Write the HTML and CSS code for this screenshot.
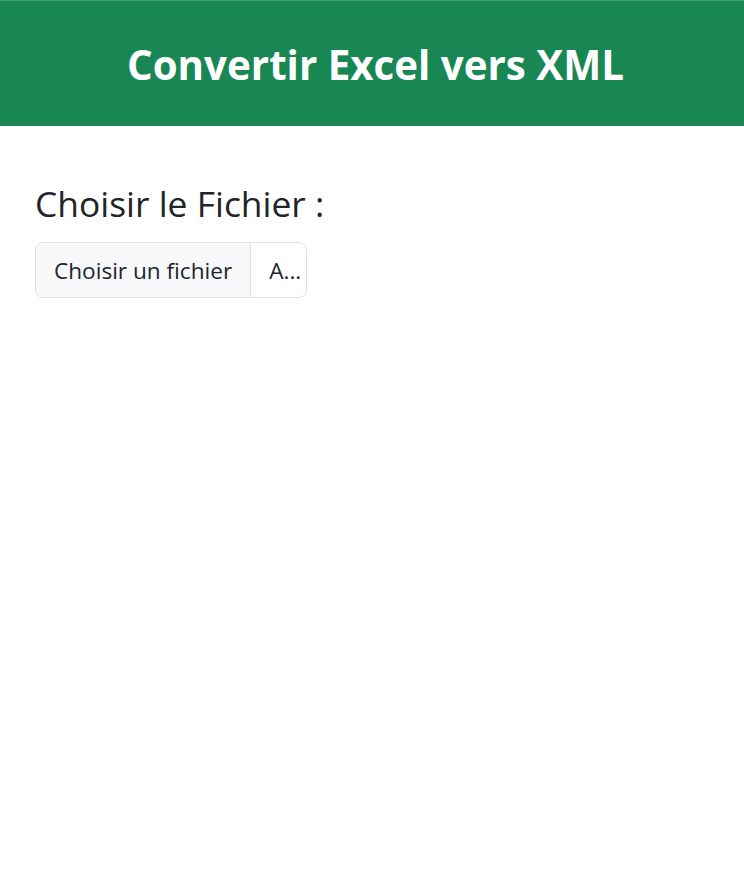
FILE: index.html
```html
<!DOCTYPE html>
<html lang="fr">
<head>
<meta charset="utf-8">
<title>Convertir Excel vers XML</title>
<link rel="stylesheet" href="styles.css">
</head>
<body>
<header class="banner">
  <h1 class="banner-title">Convertir Excel vers XML</h1>
</header>
<main class="container">
  <label class="field-label" for="file">Choisir le Fichier :</label>
  <div class="file-input" id="file">
    <span class="file-button">Choisir un fichier</span>
    <span class="file-name">A...</span>
  </div>
</main>
</body>
</html>
```

FILE: styles.css
```css
* { box-sizing: border-box; }
html, body { margin: 0; padding: 0; background: #fff; }
body {
  font-family: "Open Sans", "Noto Sans", sans-serif;
  color: #212529;
}
.banner {
  background: #198754;
  border-top: 1px solid #4f9f7a;
  height: 126px;
  display: flex;
  align-items: center;
  justify-content: center;
  padding-top: 4px;
}
.banner-title {
  margin: 0;
  color: #fff;
  font-weight: 700;
  font-size: 40.3px;
  line-height: 1.2;
  padding-left: 7px;
}
.container {
  padding: 56px 36px 0 35px;
  display: flex;
  flex-direction: column;
  align-items: flex-start;
}
.field-label {
  display: block;
  font-size: 35.4px;
  line-height: 1.2;
  margin-bottom: 18px;
}
.file-input {
  display: flex;
  width: 272px;
  height: 56px;
  border: 1px solid #dee2e6;
  border-radius: 8px;
  overflow: hidden;
  font-size: 22.6px;
}
.file-button {
  display: flex;
  align-items: center;
  background: #f8f9fa;
  border-right: 1px solid #dee2e6;
  padding: 0 18px;
  white-space: nowrap;
}
.file-name {
  display: flex;
  align-items: center;
  padding: 0 18px;
  white-space: nowrap;
}
```
